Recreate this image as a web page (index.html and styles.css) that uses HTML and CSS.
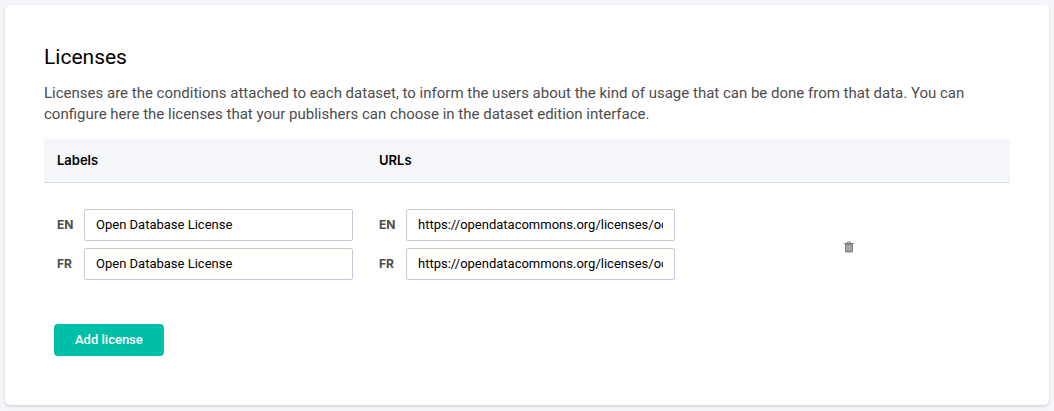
FILE: index.html
```html
<!DOCTYPE html>
<html lang="en">
<head>
<meta charset="utf-8">
<meta name="viewport" content="width=device-width, initial-scale=1">
<title>Licenses</title>
<link rel="stylesheet" href="styles.css">
</head>
<body>
<main class="card">
  <h1 class="card-title">Licenses</h1>
  <p class="card-intro">Licenses are the conditions attached to each dataset, to inform the users about the kind of usage that can be done from that data. You can configure here the licenses that your publishers can choose in the dataset edition interface.</p>
  <table class="licenses">
    <thead>
      <tr><th scope="col">Labels</th><th scope="col">URLs</th><td></td></tr>
    </thead>
    <tbody>
      <tr>
        <td>
          <div class="fields">
            <div class="field"><label for="label-en">EN</label><input id="label-en" type="text" value="Open Database License"></div>
            <div class="field"><label for="label-fr">FR</label><input id="label-fr" type="text" value="Open Database License"></div>
          </div>
        </td>
        <td>
          <div class="fields">
            <div class="field"><label for="url-en">EN</label><input id="url-en" type="text" value="https://opendatacommons.org/licenses/odbl/"></div>
            <div class="field"><label for="url-fr">FR</label><input id="url-fr" type="text" value="https://opendatacommons.org/licenses/odbl/"></div>
          </div>
        </td>
        <td class="actions">
          <button class="delete" type="button" aria-label="Delete license">
            <svg viewBox="0 0 10 12" width="10" height="12" aria-hidden="true">
              <path d="M3.5 2V1h3v1M0 2.5h10" fill="none" stroke="#7c7f85"/>
              <path d="M1 3h8v7.5a1 1 0 0 1-1 1H2a1 1 0 0 1-1-1z" fill="#83868b"/>
              <path d="M3 4.2v5.6M5 4.2v5.6M7 4.2v5.6" stroke="#d5d7da" stroke-width=".8"/>
            </svg>
          </button>
        </td>
      </tr>
    </tbody>
  </table>
  <button class="add" type="button">Add license</button>
</main>
</body>
</html>
```
FILE: styles.css
```css
* {
  box-sizing: border-box;
}

body {
  margin: 0;
  padding: 5px;
  background: #f5f6fa;
  color: #000;
  font-family: Roboto, "Liberation Sans", sans-serif;
  font-size: 13px;
}

.card {
  padding: 39px;
  padding-bottom: 49px;
  border-radius: 5px;
  background: #fff;
  box-shadow: 0 1px 3px rgba(30, 40, 60, 0.2);
}

.card-title {
  margin: 0 0 13px;
  font-size: 21px;
  font-weight: 400;
  line-height: 26px;
}

.card-intro {
  margin: 0 0 14px;
  color: #4d4d4d;
  font-size: 15px;
  line-height: 21px;
}

.licenses {
  width: 100%;
  table-layout: fixed;
  border-collapse: collapse;
}

.licenses th {
  height: 43px;
  padding: 0 13px;
  font-family: Inter, "Liberation Sans", sans-serif;
  font-weight: 600;
  text-align: left;
}

.licenses thead {
  background: #f5f6fa;
  border-bottom: 1px solid #d6dfeb;
}

.licenses tbody td {
  padding: 26px 13px;
}

.fields {
  display: flex;
  flex-direction: column;
  gap: 7px;
}

.field {
  display: flex;
  align-items: center;
}

.field label {
  flex: 0 0 27px;
  color: #4d4d4d;
  font-family: Inter, "Liberation Sans", sans-serif;
  font-size: 12px;
  font-weight: 700;
}

.field input {
  flex: 1;
  min-width: 0;
  height: 32px;
  padding: 0 11px;
  border: 1px solid #c3ccd8;
  border-radius: 2px;
  background: #fff;
  color: #000;
  font: inherit;
}

.licenses .actions {
  text-align: center;
}

.delete {
  padding: 8px 4px 2px;
  border: 0;
  background: none;
  cursor: pointer;
}

.delete svg {
  display: block;
}

.add {
  height: 32px;
  margin: 18px 10px 0;
  padding: 0 21px;
  border: 0;
  border-radius: 4px;
  background: #00bfa9;
  color: #fff;
  font: inherit;
  font-weight: 500;
  cursor: pointer;
}
```
